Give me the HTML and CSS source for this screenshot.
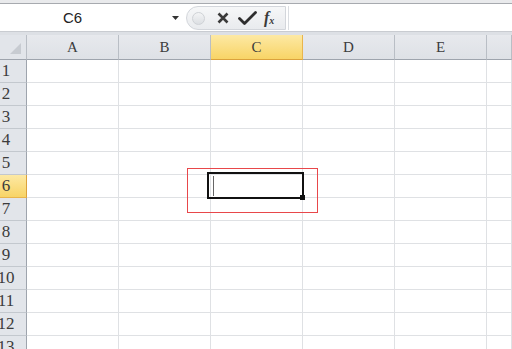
FILE: index.html
```html
<!DOCTYPE html>
<html lang="en">
<head>
    <meta charset="UTF-8">
    <meta name="viewport" content="width=device-width, initial-scale=1.0">
    <title>Sheet1</title>
    <link rel="stylesheet" href="styles.css">
</head>
<body>
    <div class="app">
        <div class="top-strip"></div>

        <div class="formula-bar">
            <div class="name-box">
                <span class="cell-name">C6</span>
                <svg class="drop-arrow" width="7" height="4" viewBox="0 0 7 4"><path d="M0 0h7L3.5 4z" fill="#333"/></svg>
            </div>
            <div class="fx-buttons">
                <span class="grip"></span>
                <svg class="btn-icon" width="12" height="12" viewBox="0 0 12 12">
                    <path d="M1.5 1.5l9 9M10.5 1.5l-9 9" stroke="#3a3a3a" stroke-width="2.6" stroke-linecap="butt"/>
                </svg>
                <svg class="btn-icon" width="19" height="14" viewBox="0 0 19 14">
                    <path d="M1.5 7.5l5 5L17.5 1.5" stroke="#2e2e2e" stroke-width="2.8" fill="none" stroke-linejoin="round" stroke-linecap="round"/>
                </svg>
                <span class="fx">f<sub>x</sub></span>
            </div>
            <div class="formula-input"></div>
        </div>

        <div class="bar-gap"></div>

        <div class="sheet">
            <div class="corner"><span class="corner-tri"></span></div>
            <div class="col-head">A</div>
            <div class="col-head">B</div>
            <div class="col-head active">C</div>
            <div class="col-head">D</div>
            <div class="col-head">E</div>
            <div class="col-head"></div>

            <div class="row-head"><span>1</span></div><div class="cell"></div><div class="cell"></div><div class="cell"></div><div class="cell"></div><div class="cell"></div><div class="cell"></div>
            <div class="row-head"><span>2</span></div><div class="cell"></div><div class="cell"></div><div class="cell"></div><div class="cell"></div><div class="cell"></div><div class="cell"></div>
            <div class="row-head"><span>3</span></div><div class="cell"></div><div class="cell"></div><div class="cell"></div><div class="cell"></div><div class="cell"></div><div class="cell"></div>
            <div class="row-head"><span>4</span></div><div class="cell"></div><div class="cell"></div><div class="cell"></div><div class="cell"></div><div class="cell"></div><div class="cell"></div>
            <div class="row-head"><span>5</span></div><div class="cell"></div><div class="cell"></div><div class="cell"></div><div class="cell"></div><div class="cell"></div><div class="cell"></div>
            <div class="row-head active"><span>6</span></div><div class="cell"></div><div class="cell"></div><div class="cell selected"><span class="caret"></span><span class="fill-handle"></span></div><div class="cell"></div><div class="cell"></div><div class="cell"></div>
            <div class="row-head"><span>7</span></div><div class="cell"></div><div class="cell"></div><div class="cell"></div><div class="cell"></div><div class="cell"></div><div class="cell"></div>
            <div class="row-head"><span>8</span></div><div class="cell"></div><div class="cell"></div><div class="cell"></div><div class="cell"></div><div class="cell"></div><div class="cell"></div>
            <div class="row-head"><span>9</span></div><div class="cell"></div><div class="cell"></div><div class="cell"></div><div class="cell"></div><div class="cell"></div><div class="cell"></div>
            <div class="row-head"><span>10</span></div><div class="cell"></div><div class="cell"></div><div class="cell"></div><div class="cell"></div><div class="cell"></div><div class="cell"></div>
            <div class="row-head"><span>11</span></div><div class="cell"></div><div class="cell"></div><div class="cell"></div><div class="cell"></div><div class="cell"></div><div class="cell"></div>
            <div class="row-head"><span>12</span></div><div class="cell"></div><div class="cell"></div><div class="cell"></div><div class="cell"></div><div class="cell"></div><div class="cell"></div>
            <div class="row-head"><span>13</span></div><div class="cell"></div><div class="cell"></div><div class="cell"></div><div class="cell"></div><div class="cell"></div><div class="cell"></div>
        </div>

        <!-- red annotation box around C6 -->
        <div class="highlight-box"></div>
    </div>
</body>
</html>
```

FILE: styles.css
```css
body {
    margin: 0;
    padding: 0;
    background-color: #fff;
    font-family: "Liberation Sans", Arial, sans-serif;
}

.app {
    position: relative;
    width: 512px;
    height: 349px;
    overflow: hidden;
}

.top-strip {
    height: 3px;
    background-color: #e9eaec;
    border-bottom: 1px solid #a7aaaf;
}

.formula-bar {
    display: flex;
    height: 27px;
    background-color: #fff;
}

.name-box {
    width: 186px;
    display: flex;
    align-items: center;
}

.cell-name {
    width: 145px;
    text-align: center;
    font-size: 15px;
    color: #222;
}

.drop-arrow {
    margin-left: 27px;
    margin-top: 1px;
}

.fx-buttons {
    width: 100px;
    display: flex;
    align-items: center;
    box-sizing: border-box;
    margin: 2px 0 1px;
    border: 1px solid #d3d6db;
    border-radius: 12px 0 0 12px;
    background: linear-gradient(#f6f7f8, #e9ebee);
}

.grip {
    width: 11px;
    height: 11px;
    margin-left: 5px;
    border-radius: 50%;
    border: 1px solid #cfd2d6;
    background: linear-gradient(#f3f4f5, #dcdfe3);
}

.btn-icon {
    margin-left: 12px;
}

.btn-icon + .btn-icon {
    margin-left: 9px;
}

.fx {
    margin-left: 7px;
    font-family: "Liberation Serif", "Times New Roman", serif;
    font-style: italic;
    font-weight: bold;
    font-size: 16px;
    color: #3a3a3a;
}

.fx sub {
    font-size: 10px;
    vertical-align: -1px;
}

.formula-input {
    flex: 1;
    margin: 2px 0 1px 2px;
    border-left: 1px solid #dadde1;
    background-color: #fff;
}

.bar-gap {
    height: 4px;
    background-color: #dde0e5;
    border-top: 1px solid #c9ccd1;
    box-sizing: border-box;
}

.sheet {
    display: grid;
    grid-template-columns: 27px repeat(5, 92px) 1fr;
    grid-template-rows: 25px;
    grid-auto-rows: 23px;
    font-family: "Liberation Serif", "Times New Roman", serif;
    font-size: 15px;
    color: #3c3c3c;
}

.corner,
.col-head,
.row-head,
.cell {
    box-sizing: border-box;
}

.corner {
    position: relative;
    background-color: #e2e5ea;
    border-right: 1px solid #b9bec5;
    border-bottom: 1px solid #9ea4ad;
}

.corner-tri {
    position: absolute;
    right: 5px;
    bottom: 5px;
    width: 0;
    height: 0;
    border-left: 11px solid transparent;
    border-bottom: 11px solid #c7cbd1;
}

.col-head {
    display: flex;
    align-items: center;
    justify-content: center;
    background: linear-gradient(#e7e9ed, #dee1e6);
    border-right: 1px solid #b9bec5;
    border-bottom: 1px solid #9ea4ad;
}

.col-head.active {
    background: linear-gradient(#fde9a4, #f8d466);
    border-right-color: #e9b54c;
    border-bottom-color: #dba23c;
}

.row-head {
    overflow: hidden;
    display: flex;
    align-items: center;
    background-color: #e2e5ea;
    border-right: 1px solid #9ea4ad;
    border-bottom: 1px solid #c3c8ce;
    font-size: 17px;
}

.row-head span {
    flex: none;
    width: 24px;
    margin-left: -6px;
    text-align: center;
}

.row-head.active {
    background: linear-gradient(#fde9a4, #f8d466);
    border-right-color: #dba23c;
    border-bottom-color: #e9b54c;
}

.cell {
    border-right: 1px solid #dfe1e4;
    border-bottom: 1px solid #dfe1e4;
}

.cell.selected {
    position: relative;
}

.cell.selected::before {
    content: "";
    position: absolute;
    left: -4px;
    top: -3px;
    width: 97px;
    height: 27px;
    box-sizing: border-box;
    border: 2px solid #111;
}

.caret {
    position: absolute;
    left: 2px;
    top: 1px;
    bottom: 1px;
    width: 1px;
    background-color: #666;
}

.fill-handle {
    position: absolute;
    right: -3px;
    bottom: -3px;
    width: 5px;
    height: 5px;
    background-color: #111;
}

.highlight-box {
    position: absolute;
    left: 187px;
    top: 168px;
    width: 131px;
    height: 45px;
    box-sizing: border-box;
    border: 1px solid #e8474a;
}
```
